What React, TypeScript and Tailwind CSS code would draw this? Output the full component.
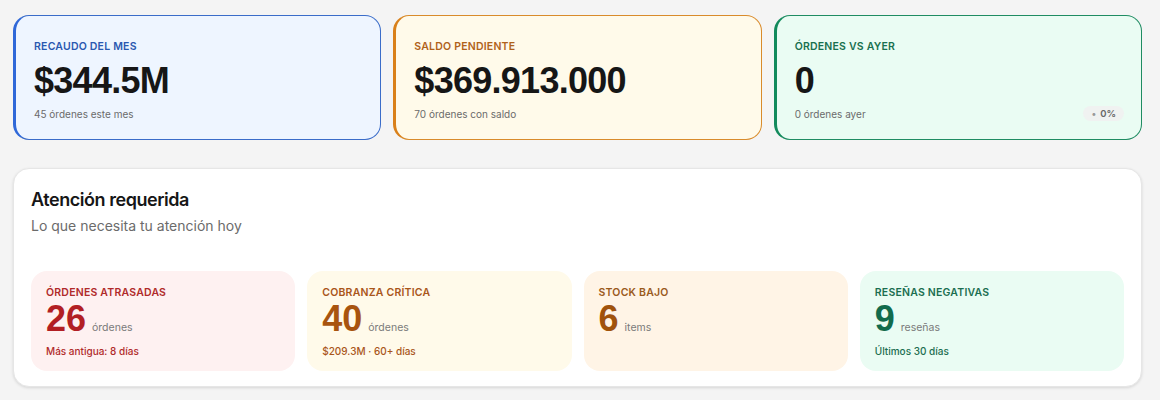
import React from 'react';

const SANS = "font-['Inter','Noto_Sans',sans-serif]";
const NUM = "font-['Liberation_Sans','Arial',sans-serif]";

interface KpiProps {
  label: string;
  value: string;
  sub: string;
  box: string;
  labelColor: string;
  badge?: string;
}

function KpiCard({ label, value, sub, box, labelColor, badge }: KpiProps) {
  return (
    <div className={`rounded-2xl border border-l-[3px] pl-[18px] pr-[17px] pt-[23px] pb-[17px] ${box}`}>
      <div className={`text-[10.5px] leading-4 font-semibold uppercase tracking-[0.02em] ${labelColor}`}>{label}</div>
      <div className={`${NUM} mt-1.5 text-[36px] leading-10 font-bold tracking-[-0.02em] text-[#161616]`}>{value}</div>
      <div className="mt-1 flex items-center justify-between">
        <span className="text-[10px] leading-4 pt-px text-[#6b6b6b]">{sub}</span>
        {badge && (
          <span className="rounded-full bg-[#f0f2f1] px-2 py-0.5 text-[9.5px] leading-[11px] font-semibold text-[#666]">
            <span className="mr-1 text-[#999]">•</span>
            {badge}
          </span>
        )}
      </div>
    </div>
  );
}

interface AlertProps {
  label: string;
  value: string;
  unit: string;
  note?: string;
  bg: string;
  color: string;
  labelColor: string;
  noteColor: string;
}

function AlertCard({ label, value, unit, note, bg, color, labelColor, noteColor }: AlertProps) {
  return (
    <div className={`rounded-2xl px-[15px] pt-[14px] pb-[12px] ${bg}`}>
      <div className={`text-[10.5px] leading-4 font-semibold uppercase tracking-[0.02em] ${labelColor}`}>{label}</div>
      <div className="flex items-baseline gap-1.5">
        <span className={`${NUM} text-[36px] leading-9 font-bold ${color}`}>{value}</span>
        <span className="text-[10.5px] text-[#7a7a7a]">{unit}</span>
      </div>
      {note && <div className={`mt-1.5 text-[10px] leading-4 font-medium ${noteColor}`}>{note}</div>}
    </div>
  );
}

export default function App() {
  return (
    <div className={`${SANS} min-h-[400px] bg-[#f4f4f4] pl-[13px] pr-[18px] pt-[15px] pb-4`}>
      <div className="grid grid-cols-3 gap-3">
        <KpiCard
          label="Recaudo del mes"
          value="$344.5M"
          sub="45 órdenes este mes"
          box="bg-[#eef5ff] border-[#3a6cc9] border-l-[#2f68d8]"
          labelColor="text-[#2a58b0]"
        />
        <KpiCard
          label="Saldo pendiente"
          value="$369.913.000"
          sub="70 órdenes con saldo"
          box="bg-[#fffaea] border-[#d98b2b] border-l-[#d9801a]"
          labelColor="text-[#b0621a]"
        />
        <KpiCard
          label="Órdenes vs ayer"
          value="0"
          sub="0 órdenes ayer"
          box="bg-[#eafcf3] border-[#1f8c62] border-l-[#138a5c]"
          labelColor="text-[#19704f]"
          badge="0%"
        />
      </div>

      <div className="mt-[28px] rounded-2xl border border-[#e6e6e6] bg-white px-[17px] pt-[17px] pb-[15px] shadow-[0_1px_3px_rgba(0,0,0,0.12)]">
        <h2 className="text-[18px] leading-7 font-semibold tracking-tight text-[#161616]">Atención requerida</h2>
        <p className="mt-0 text-[14px] leading-6 text-[#6b6b6b]">Lo que necesita tu atención hoy</p>
        <div className="mt-[33px] grid grid-cols-4 gap-3">
          <AlertCard
            label="Órdenes atrasadas"
            value="26"
            unit="órdenes"
            note="Más antigua: 8 días"
            bg="bg-[#fef1f1]"
            color="text-[#b21f24]"
            labelColor="text-[#b02a2a]"
            noteColor="text-[#b02a2a]"
          />
          <AlertCard
            label="Cobranza crítica"
            value="40"
            unit="órdenes"
            note="$209.3M · 60+ días"
            bg="bg-[#fffaea]"
            color="text-[#a8540f]"
            labelColor="text-[#a9561a]"
            noteColor="text-[#a9561a]"
          />
          <AlertCard
            label="Stock bajo"
            value="6"
            unit="items"
            bg="bg-[#fff4e6]"
            color="text-[#a0520c]"
            labelColor="text-[#9a5a1c]"
            noteColor="text-[#9a5a1c]"
          />
          <AlertCard
            label="Reseñas negativas"
            value="9"
            unit="reseñas"
            note="Últimos 30 días"
            bg="bg-[#eafcf3]"
            color="text-[#126b4c]"
            labelColor="text-[#1b6e50]"
            noteColor="text-[#1b6e50]"
          />
        </div>
      </div>
    </div>
  );
}
